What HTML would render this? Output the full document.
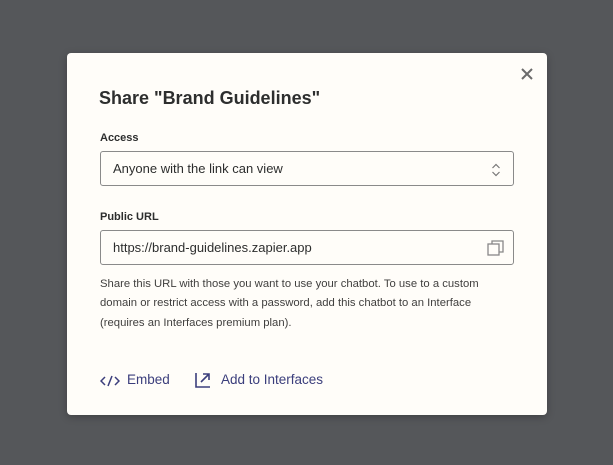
<!DOCTYPE html>
<html><head><style>
body{margin:0;width:613px;height:465px;background:#55575a;font-family:"Liberation Sans",sans-serif;position:relative;overflow:hidden}
.m{position:absolute;left:67px;top:53px;width:480px;height:362px;background:#fffdf9;border-radius:4px;box-shadow:0 2px 8px rgba(0,0,0,.25)}
.a{position:absolute}
.t{left:32px;top:35px;font-size:18px;font-weight:bold;color:#2d2e2e}
.l{font-size:11px;font-weight:bold;color:#2d2e2e;left:33px}
.box{left:33px;width:412px;height:33px;border:1px solid #8a8a8a;border-radius:3px;font-size:13px;color:#2d2e2e;line-height:34px;text-indent:12px}
.h{left:33px;top:222px;width:408px;font-size:11.3px;line-height:19.3px;color:#403f3e}
.lk{top:319px;font-size:13.5px;color:#3b3e7c}
</style></head><body>
<div class="m">
<svg class="a" style="left:453px;top:14px" width="14" height="14"><path d="M2 2L12 12M12 2L2 12" stroke="#6b6b6b" stroke-width="2"/></svg>
<div class="a t">Share "Brand Guidelines"</div>
<div class="a l" style="top:79px">Access</div>
<div class="a box" style="top:98px">Anyone with the link can view
<svg class="a" style="left:390px;top:11px" width="10" height="14"><path d="M1.5 5L5 1.5 8.5 5M1.5 9L5 12.5 8.5 9" fill="none" stroke="#777" stroke-width="1.2"/></svg></div>
<div class="a l" style="top:158px">Public URL</div>
<div class="a box" style="top:177px">https://brand-guidelines.zapier.app
<svg class="a" style="left:386px;top:9px" width="18" height="16"><rect x="1" y="4" width="11" height="11" fill="none" stroke="#888" stroke-width="1.3"/><path d="M5 4V1h11v11h-4" fill="none" stroke="#888" stroke-width="1.3"/></svg></div>
<div class="a h">Share this URL with those you want to use your chatbot. To use to a custom domain or restrict access with a password, add this chatbot to an Interface (requires an Interfaces premium plan).</div>
<svg class="a" style="left:33px;top:321px" width="20" height="14"><path d="M5 3L1 7l4 4M15 3l4 4-4 4M12 2L8 12" fill="none" stroke="#3b3e7c" stroke-width="1.5"/></svg>
<div class="a lk" style="left:60px">Embed</div>
<svg class="a" style="left:127px;top:318px" width="18" height="18"><path d="M2 2v14h14M7 11l8-8M9 3h6v6" fill="none" stroke="#3b3e7c" stroke-width="1.6"/></svg>
<div class="a lk" style="left:154px">Add to Interfaces</div>
</div>
</body></html>
